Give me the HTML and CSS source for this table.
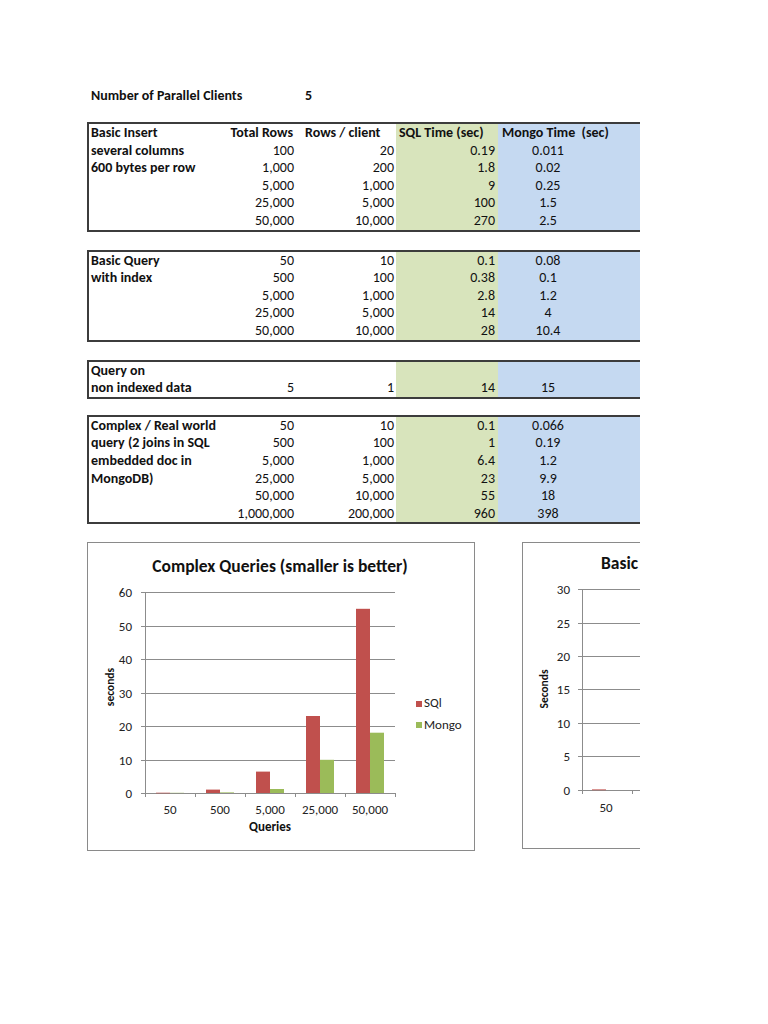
FILE: index.html
```html
<!DOCTYPE html>
<html>
<head>
<meta charset="utf-8">
<link rel="stylesheet" href="styles.css">
<title>SQL vs Mongo</title>
</head>
<body>
<div class="sheet">
  <div class="title-row">
    <span class="t-label">Number of Parallel Clients</span>
    <span class="t-val">5</span>
  </div>

  <div class="tbl">
    <div class="a b">Basic Insert</div><div class="n b">Total Rows</div><div class="h b">Rows / client</div><div class="sql hl b">SQL Time (sec)</div><div class="mg hl b">Mongo Time&nbsp;&nbsp;(sec)</div>
    <div class="a b">several columns</div><div class="n">100</div><div class="n">20</div><div class="sql">0.19</div><div class="mg">0.011</div><div class="mx"></div>
    <div class="a b">600 bytes per row</div><div class="n">1,000</div><div class="n">200</div><div class="sql">1.8</div><div class="mg">0.02</div><div class="mx"></div>
    <div class="a"></div><div class="n">5,000</div><div class="n">1,000</div><div class="sql">9</div><div class="mg">0.25</div><div class="mx"></div>
    <div class="a"></div><div class="n">25,000</div><div class="n">5,000</div><div class="sql">100</div><div class="mg">1.5</div><div class="mx"></div>
    <div class="a"></div><div class="n">50,000</div><div class="n">10,000</div><div class="sql">270</div><div class="mg">2.5</div><div class="mx"></div>
  </div>

  <div class="tbl">
    <div class="a b">Basic Query</div><div class="n">50</div><div class="n">10</div><div class="sql">0.1</div><div class="mg">0.08</div><div class="mx"></div>
    <div class="a b">with index</div><div class="n">500</div><div class="n">100</div><div class="sql">0.38</div><div class="mg">0.1</div><div class="mx"></div>
    <div class="a"></div><div class="n">5,000</div><div class="n">1,000</div><div class="sql">2.8</div><div class="mg">1.2</div><div class="mx"></div>
    <div class="a"></div><div class="n">25,000</div><div class="n">5,000</div><div class="sql">14</div><div class="mg">4</div><div class="mx"></div>
    <div class="a"></div><div class="n">50,000</div><div class="n">10,000</div><div class="sql">28</div><div class="mg">10.4</div><div class="mx"></div>
  </div>

  <div class="tbl t3">
    <div class="a b">Query on</div><div class="n"></div><div class="n"></div><div class="sql"></div><div class="mg"></div><div class="mx"></div>
    <div class="a b">non indexed data</div><div class="n">5</div><div class="n">1</div><div class="sql">14</div><div class="mg">15</div><div class="mx"></div>
  </div>

  <div class="tbl">
    <div class="a b">Complex / Real world</div><div class="n">50</div><div class="n">10</div><div class="sql">0.1</div><div class="mg">0.066</div><div class="mx"></div>
    <div class="a b">query (2 joins in SQL</div><div class="n">500</div><div class="n">100</div><div class="sql">1</div><div class="mg">0.19</div><div class="mx"></div>
    <div class="a b">embedded doc in</div><div class="n">5,000</div><div class="n">1,000</div><div class="sql">6.4</div><div class="mg">1.2</div><div class="mx"></div>
    <div class="a b">MongoDB)</div><div class="n">25,000</div><div class="n">5,000</div><div class="sql">23</div><div class="mg">9.9</div><div class="mx"></div>
    <div class="a"></div><div class="n">50,000</div><div class="n">10,000</div><div class="sql">55</div><div class="mg">18</div><div class="mx"></div>
    <div class="a"></div><div class="n">1,000,000</div><div class="n">200,000</div><div class="sql">960</div><div class="mg">398</div><div class="mx"></div>
  </div>

  <div class="charts">
    <div class="chart chart1">
      <svg width="388" height="309" viewBox="0 0 388 309">
        <text class="ctitle" x="193" y="30" text-anchor="middle">Complex Queries (smaller is better)</text>
        <g class="grid">
          <line x1="54" y1="50.5" x2="308" y2="50.5"/>
          <line x1="54" y1="84.5" x2="308" y2="84.5"/>
          <line x1="54" y1="117.5" x2="308" y2="117.5"/>
          <line x1="54" y1="151.5" x2="308" y2="151.5"/>
          <line x1="54" y1="184.5" x2="308" y2="184.5"/>
          <line x1="54" y1="218.5" x2="308" y2="218.5"/>
          <line x1="54" y1="251.5" x2="308" y2="251.5"/>
          <line x1="58.5" y1="50" x2="58.5" y2="251"/>
          <line x1="58.5" y1="251" x2="58.5" y2="255"/>
          <line x1="108.5" y1="251" x2="108.5" y2="255"/>
          <line x1="158.5" y1="251" x2="158.5" y2="255"/>
          <line x1="208.5" y1="251" x2="208.5" y2="255"/>
          <line x1="258.5" y1="251" x2="258.5" y2="255"/>
          <line x1="308.5" y1="251" x2="308.5" y2="255"/>
        </g>
        <g class="ylab" text-anchor="end">
          <text x="45" y="55">60</text>
          <text x="45" y="89">50</text>
          <text x="45" y="122">40</text>
          <text x="45" y="156">30</text>
          <text x="45" y="189">20</text>
          <text x="45" y="223">10</text>
          <text x="45" y="256">0</text>
        </g>
        <text class="axtitle" transform="translate(27 145) rotate(-90)" text-anchor="middle">seconds</text>
        <g class="sqlbar">
          <rect x="69" y="250.7" width="14" height="0.6"/>
          <rect x="119" y="247.6" width="14" height="3.4"/>
          <rect x="169" y="229.6" width="14" height="21.4"/>
          <rect x="219" y="174" width="14" height="77"/>
          <rect x="269" y="66.8" width="14" height="184.2"/>
        </g>
        <g class="mgbar">
          <rect x="83" y="250.8" width="14" height="0.3"/>
          <rect x="133" y="250.4" width="14" height="0.6"/>
          <rect x="183" y="247" width="14" height="4"/>
          <rect x="233" y="217.8" width="14" height="33.2"/>
          <rect x="283" y="190.7" width="14" height="60.3"/>
        </g>
        <g class="xlab" text-anchor="middle">
          <text x="83" y="272">50</text>
          <text x="133" y="272">500</text>
          <text x="183" y="272">5,000</text>
          <text x="233" y="272">25,000</text>
          <text x="283" y="272">50,000</text>
        </g>
        <text class="axtitle2" x="183" y="289" text-anchor="middle">Queries</text>
        <rect class="sqlbar" x="329" y="159" width="6" height="6"/>
        <text class="leg" x="337" y="165">SQl</text>
        <rect class="mgbar" x="329" y="180" width="6" height="6"/>
        <text class="leg" x="337" y="187">Mongo</text>
      </svg>
    </div>
    <div class="chart chart2">
      <svg width="390" height="307" viewBox="0 0 390 307">
        <text class="ctitle" x="79" y="27">Basic Query (smaller is better)</text>
        <g class="grid">
          <line x1="56" y1="47.5" x2="390" y2="47.5"/>
          <line x1="56" y1="81.5" x2="390" y2="81.5"/>
          <line x1="56" y1="114.5" x2="390" y2="114.5"/>
          <line x1="56" y1="147.5" x2="390" y2="147.5"/>
          <line x1="56" y1="181.5" x2="390" y2="181.5"/>
          <line x1="56" y1="214.5" x2="390" y2="214.5"/>
          <line x1="56" y1="248.5" x2="390" y2="248.5"/>
          <line x1="60.5" y1="47" x2="60.5" y2="248"/>
          <line x1="60.5" y1="248" x2="60.5" y2="252"/>
          <line x1="110.5" y1="248" x2="110.5" y2="252"/>
          <line x1="160.5" y1="248" x2="160.5" y2="252"/>
        </g>
        <g class="ylab" text-anchor="end">
          <text x="48" y="52">30</text>
          <text x="48" y="86">25</text>
          <text x="48" y="119">20</text>
          <text x="48" y="152">15</text>
          <text x="48" y="186">10</text>
          <text x="48" y="219">5</text>
          <text x="48" y="253">0</text>
        </g>
        <text class="axtitle" transform="translate(26 147) rotate(-90)" text-anchor="middle">Seconds</text>
        <rect class="sqlbar" x="70" y="247.4" width="14" height="0.8"/>
        <g class="xlab" text-anchor="middle">
          <text x="84" y="270">50</text>
          <text x="134" y="270">500</text>
        </g>
      </svg>
    </div>
  </div>
</div>
</body>
</html>
```

FILE: styles.css
```css
html, body {
  margin: 0;
  padding: 0;
  background: #fff;
}

.sheet {
  width: 640px;
  overflow: hidden;
  padding-top: 86px;
  padding-bottom: 100px;
  font-family: "Carlito", "Lato", "Open Sans", sans-serif;
  font-size: 14px;
  color: #111;
}

.title-row {
  display: flex;
  align-items: center;
  height: 18px;
  padding-left: 91px;
  margin-bottom: 18px;
  font-weight: 700;
}

.t-label {
  width: 214px;
}

.tbl {
  margin-left: 87px;
  width: 553px;
  display: grid;
  grid-template-columns: 106px 101px 100px 102px 100px 42px;
  grid-auto-rows: 17.6px;
  border-top: 2px solid #3c3c3c;
  border-bottom: 2px solid #3c3c3c;
  border-left: 2px solid #3c3c3c;
  margin-bottom: 18px;
  line-height: 17.6px;
}

.tbl.t3 {
  margin-bottom: 16px;
}

.tbl > div {
  white-space: nowrap;
}

.a {
  padding-left: 2px;
}

.b {
  font-weight: 700;
}

.n {
  text-align: right;
  padding-right: 2px;
}

.n.b {
  padding-right: 3px;
}

.h {
  padding-left: 9px;
}

.sql {
  background: #d8e4bc;
  text-align: right;
  padding-right: 3px;
}

.sql.hl {
  text-align: left;
  padding-left: 3px;
  padding-right: 0;
}

.mg {
  background: #c5d9f1;
  text-align: center;
}

.mg.hl {
  grid-column: span 2;
  text-align: left;
  padding-left: 4px;
}

.mx {
  background: #c5d9f1;
}

.charts {
  display: flex;
  align-items: flex-start;
  gap: 47px;
  margin-left: 87px;
  margin-top: 0;
}

.chart {
  flex: none;
  border: 1px solid #8a8a8a;
  background: #fff;
}

.chart svg {
  display: block;
  margin: -1px;
}

.chart1 {
  width: 386px;
  height: 307px;
}

.chart2 {
  width: 390px;
  height: 305px;
}

.ctitle {
  font-family: "Carlito", "Lato", "Open Sans", sans-serif;
  font-size: 17.5px;
  font-weight: 700;
  fill: #111;
}

.grid line {
  stroke: #8c8c8c;
  stroke-width: 1;
}

.ylab text,
.xlab text {
  font-family: "Carlito", "Lato", "Open Sans", sans-serif;
  font-size: 13px;
  fill: #222;
}

.axtitle,
.axtitle2 {
  font-family: "Carlito", "Lato", "Open Sans", sans-serif;
  font-size: 11.5px;
  font-weight: 700;
  fill: #111;
}

.axtitle2 {
  font-size: 13px;
}

.leg {
  font-family: "Carlito", "Lato", "Open Sans", sans-serif;
  font-size: 13px;
  fill: #222;
}

.sqlbar rect,
rect.sqlbar {
  fill: #c0504d;
}

.mgbar rect,
rect.mgbar {
  fill: #9bbb59;
}
```
